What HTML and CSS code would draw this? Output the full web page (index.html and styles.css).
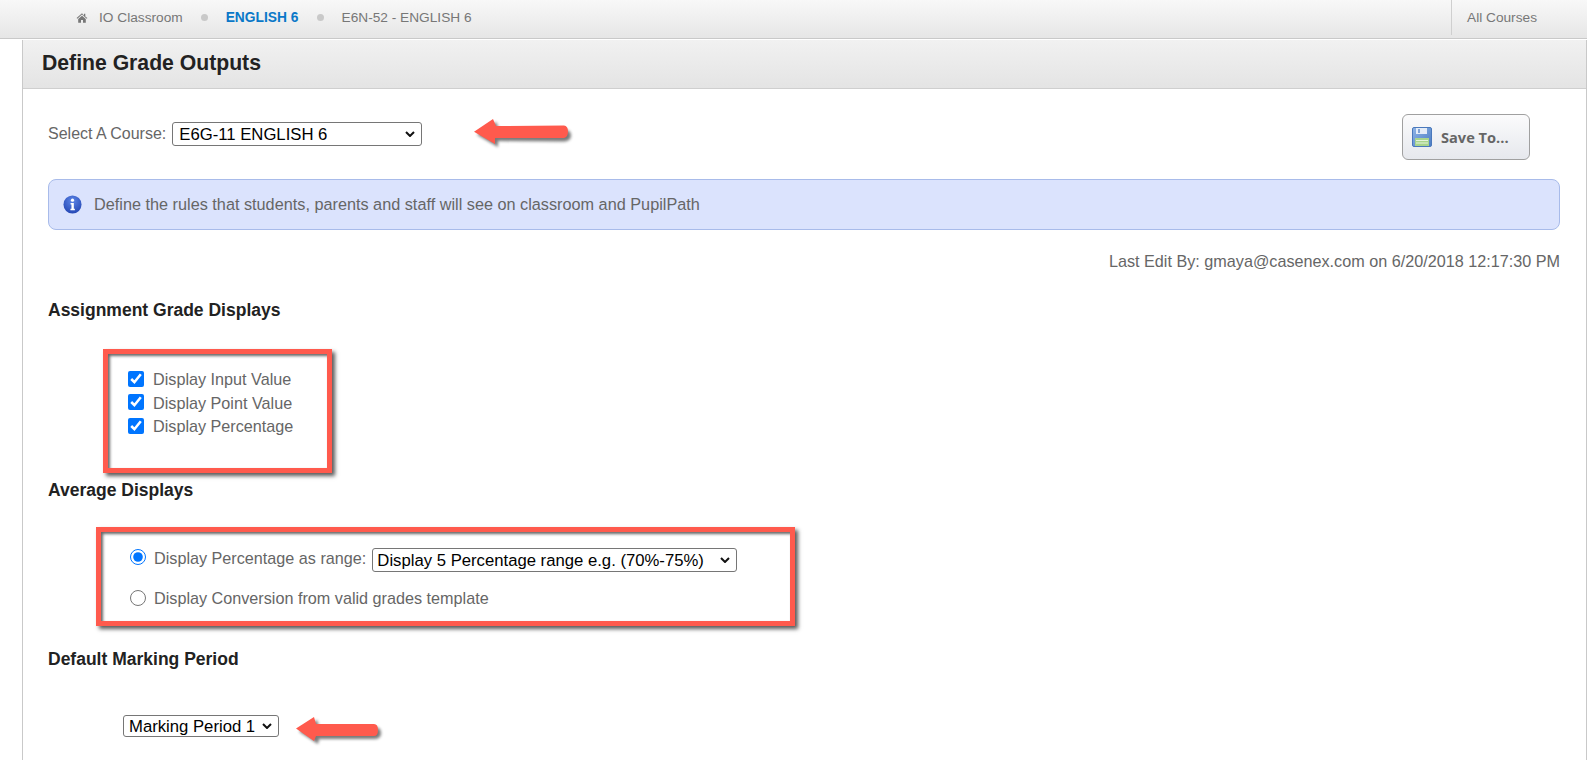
FILE: index.html
```html
<!DOCTYPE html>
<html lang="en">
<head>
<meta charset="utf-8">
<title>Define Grade Outputs</title>
<link rel="stylesheet" href="styles.css">
</head>
<body>
<nav class="topbar">
  <ol class="crumbs">
    <li class="crumb">
      <svg class="home-icon" viewBox="0 0 12 12" aria-hidden="true"><path d="M6 1.200 0.600 6.100l.7.7L6 2.600l4.700 4.200.7-.7L9.300 4.600V1.800H8v1.600z"/><path d="M2.200 7.100 6 3.700l3.800 3.400v3.700H7V8H5v2.800H2.200z"/></svg>
      IO Classroom
    </li>
    <li class="dot"></li>
    <li class="crumb crumb-active">ENGLISH 6</li>
    <li class="dot"></li>
    <li class="crumb">E6N-52 - ENGLISH 6</li>
  </ol>
  <div class="all-courses">All Courses</div>
</nav>

<main class="panel">
  <header class="panel-head"><h1>Define Grade Outputs</h1></header>
  <div class="panel-body">
    <div class="course-row">
      <label class="course-label">Select A Course:</label>
      <select class="course-select"><option>E6G-11 ENGLISH 6</option></select>
      <svg class="arrow arrow-course" viewBox="0 0 94 25" aria-hidden="true"><path class="arrow-shadow" d="M3 15.700 22 3l3 7 65 .5Q97 11 97 16.500T90 22.500L24 22l0 6z"/><path class="arrow-fill" d="M0 12.700 19 0l3 7 68-.5Q94 7 94 12.500T90 19L21 19l0 6z"/></svg>
      <button class="save-btn" type="button">
        <svg class="save-icon" viewBox="0 0 20 20" aria-hidden="true">
          <defs><linearGradient id="floppy" x1="0" y1="0" x2="1" y2="1"><stop offset="0" stop-color="#8fb4e6"/><stop offset="1" stop-color="#4a7cc4"/></linearGradient></defs>
          <rect x="0.500" y="0.500" width="19" height="19" rx="1.500" fill="url(#floppy)" stroke="#4a78bb"/>
          <rect x="4" y="1" width="11" height="6" fill="#e4ecf8"/>
          <rect x="6" y="2" width="2" height="4" fill="#7fa3d6"/>
          <rect x="3" y="11" width="14" height="8" fill="#a8d48c"/>
          <path d="M4 13.500h12M4 16h12" stroke="#e6f3dc" stroke-width="1"/>
        </svg>
        Save To...
      </button>
    </div>

    <div class="info-box">
      <svg class="info-icon" viewBox="0 0 20 20" aria-hidden="true">
        <defs><radialGradient id="gloss" cx=".5" cy=".3" r=".8"><stop offset="0" stop-color="#5d86e6"/><stop offset="1" stop-color="#1d3fae"/></radialGradient></defs>
        <circle cx="10" cy="10" r="9.500" fill="url(#gloss)"/>
        <circle cx="10" cy="5.500" r="1.700" fill="#fff"/>
        <path d="M8 8.500h3.400v6h1.100v1.500H7.800v-1.500h1.100v-4.500H8z" fill="#fff"/>
      </svg>
      Define the rules that students, parents and staff will see on classroom and PupilPath
    </div>

    <p class="last-edit">Last Edit By: gmaya@casenex.com on 6/20/2018 12:17:30 PM</p>

    <h2 class="section-title title-assign">Assignment Grade Displays</h2>
    <div class="callout callout-checks">
      <label class="check-row"><input type="checkbox" checked>Display Input Value</label>
      <label class="check-row"><input type="checkbox" checked>Display Point Value</label>
      <label class="check-row"><input type="checkbox" checked>Display Percentage</label>
    </div>

    <h2 class="section-title title-average">Average Displays</h2>
    <div class="callout callout-radios">
      <label class="radio-row radio-first"><input type="radio" name="avg" checked><span class="radio-text">Display Percentage as range:</span><select class="range-select"><option>Display 5 Percentage range e.g. (70%-75%)</option></select></label>
      <label class="radio-row"><input type="radio" name="avg">Display Conversion from valid grades template</label>
    </div>

    <h2 class="section-title title-default">Default Marking Period</h2>
    <div class="period-row">
      <select class="period-select"><option>Marking Period 1</option></select>
      <svg class="arrow arrow-period" viewBox="0 0 82 24" aria-hidden="true"><path class="arrow-shadow" d="M3 14.500 21 3l2 7 55 0Q85 10 85 16T78 22L23 22l-1 5z"/><path class="arrow-fill" d="M0 11.500 18 0l2 7 58 0Q82 7 82 13T78 19L20 19l-2 5z"/></svg>
    </div>
  </div>
</main>
</body>
</html>
```

FILE: styles.css
```css
* { box-sizing: border-box; }
html, body { margin: 0; height: 760px; overflow: hidden; background: #fff; }
body { font-family: "Liberation Sans", Arial, sans-serif; font-size: 14px; color: #666; }

.topbar {
  height: 39px;
  display: flex;
  justify-content: space-between;
  border-bottom: 1px solid #c9c9c9;
  background: linear-gradient(#f8f8f8, #e6e6e6);
}
.crumbs {
  list-style: none;
  margin: 0;
  padding: 0 0 3px 76px;
  display: flex;
  align-items: center;
  font-size: 13.700px;
  color: #777;
}
.crumb { display: flex; align-items: center; }
.crumb-active { color: #0a78c8; font-weight: bold; font-size: 13.800px; }
.home-icon { width: 12px; height: 12px; fill: #777; margin-right: 11px; }
.dot { width: 7px; height: 7px; border-radius: 50%; background: #c9c9c9; margin: 0 18px; }
.all-courses {
  width: 136px;
  height: 35px;
  border-left: 1px solid #cfcfcf;
  padding: 10px 0 0 15px;
  font-size: 13.700px;
  color: #777;
}

.panel {
  margin: 1px 0 0 22px;
  border-left: 1px solid #c9c9c9;
  border-right: 1px solid #c9c9c9;
  height: 720px;
}
.panel-head {
  height: 49px;
  padding-left: 19px;
  border-bottom: 1px solid #cfcfcf;
  background: linear-gradient(#f1f1f1, #e4e4e4);
}
.panel-head h1 {
  margin: 0;
  font-size: 21.200px;
  line-height: 46px;
  color: #222;
}
.panel-body { padding: 25px 26px 0 25px; }

.course-row { display: flex; align-items: flex-start; height: 65px; }
.course-label { margin-top: 11px; font-size: 16px; color: #666; }

.course-select, .range-select, .period-select {
  appearance: none;
  border: 1px solid #767676;
  border-radius: 3px;
  font-family: "Liberation Sans", Arial, sans-serif;
  font-size: 16.700px;
  color: #000;
  background: #fff url("data:image/svg+xml,%3Csvg xmlns='http://www.w3.org/2000/svg' viewBox='0 0 10 6'%3E%3Cpath d='M1 1l4 4 4-4' fill='none' stroke='%23111' stroke-width='2'/%3E%3C/svg%3E") no-repeat right 6px center / 10px 6px;
}
.course-select { width: 250px; height: 24px; margin: 8px 0 0 6px; padding: 0 0 0 6px; }
.range-select { width: 365px; height: 24px; margin-left: 6px; padding: 0 0 0 4px; }
.period-select { width: 156px; height: 22px; padding: 0 0 0 5px; }

.arrow { display: block; overflow: visible; }
.arrow-fill { fill: #ff5a4d; }
.arrow-shadow { fill: #333; opacity: .65; filter: blur(1.500px); }
.arrow-course { width: 94px; height: 25px; margin: 5px 0 0 52px; flex: none; }
.save-btn {
  margin-left: auto;
  margin-right: 30px;
  width: 128px;
  height: 46px;
  border: 1px solid #a0a0a0;
  border-radius: 6px;
  background: linear-gradient(#fbfbfc, #e6e8ed);
  display: flex;
  align-items: center;
  padding: 0 0 0 9px;
  gap: 9px;
  font-family: "Open Sans", "Liberation Sans", sans-serif;
  font-size: 14.600px;
  font-weight: bold;
  color: #666;
}
.save-icon { width: 20px; height: 20px; }

.info-box {
  height: 51px;
  display: flex;
  align-items: center;
  border: 1px solid #a8bbea;
  border-radius: 8px;
  background: #dbe3fd;
  padding: 0 0 0 14px;
  gap: 12px;
  font-size: 16.250px;
  color: #666;
}
.info-icon { width: 19px; height: 19px; }

.last-edit { margin: 23px 0 0; text-align: right; font-size: 16.200px; line-height: 17px; color: #666; }

.section-title { margin: 0; font-size: 17.500px; line-height: 20px; color: #222; }
.title-assign { margin-top: 30px; }
.title-average { margin-top: 7px; }
.title-default { margin-top: 23px; }

.callout {
  border: 5px solid #ff5a4d;
  box-shadow: 3px 3px 4px rgba(0,0,0,.65), inset 2px 2px 3px rgba(0,0,0,.6);
}
.callout-checks { width: 229px; height: 124px; margin: 29px 0 0 55px; padding: 14px 0 0 20px; }
.callout-radios { width: 699px; height: 99px; margin: 27px 0 0 48px; padding: 16px 0 0 29px; }

.check-row { display: flex; align-items: center; height: 23.500px; font-size: 16.200px; color: #666; }
.check-row input { width: 16px; height: 16px; margin: 0 9px 2px 0; }
.radio-row { display: flex; align-items: center; height: 24px; font-size: 16.200px; color: #666; }
.radio-row input { width: 16px; height: 16px; margin: 0 8px 0 0; }
.radio-first { margin-bottom: 14px; }
.radio-first input { margin-bottom: 7px; }
.radio-text { margin-bottom: 3px; }

.period-row { display: flex; align-items: flex-start; margin: 46px 0 0 75px; }
.arrow-period { width: 82px; height: 24px; margin: 2px 0 0 17px; flex: none; }
```
